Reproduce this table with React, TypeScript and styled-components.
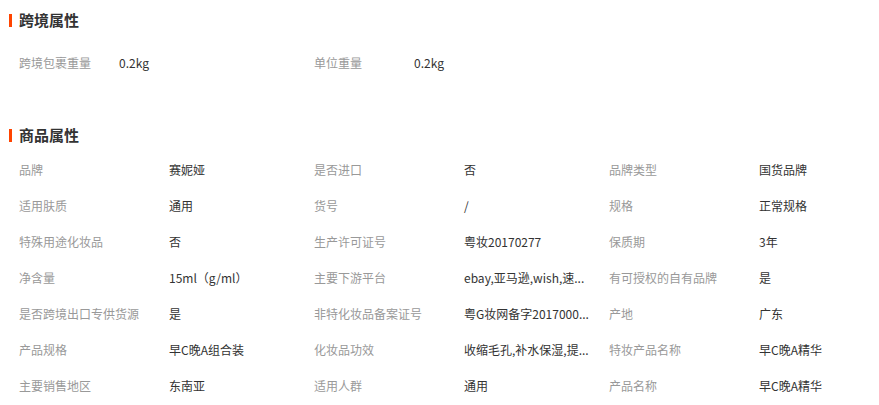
import React from "react";
import styled, { createGlobalStyle } from "styled-components";

const GlobalStyle = createGlobalStyle`
  html, body {
    margin: 0;
    padding: 0;
    background: #ffffff;
  }
  body {
    font-family: "Noto Sans CJK SC", "Liberation Sans", sans-serif;
    font-size: 12px;
    color: #333333;
  }
`;

const Page = styled.div`
  width: 879px;
  height: 405px;
  padding-top: 5px;
  box-sizing: border-box;
  overflow: hidden;
`;

const Section = styled.section<{ $gap?: number }>`
  margin-top: ${(p) => p.$gap ?? 0}px;
`;

const Title = styled.h3`
  margin: 0;
  height: 30px;
  line-height: 30px;
  display: flex;
  align-items: center;
  padding-left: 9px;
  font-size: 15px;
  font-weight: 700;
  color: #333333;
`;

const Bar = styled.span`
  display: inline-block;
  width: 3px;
  height: 13px;
  background: #ff4400;
  margin-right: 7px;
`;

const Grid = styled.div<{ $cols: number; $top: number }>`
  display: grid;
  grid-template-columns: repeat(${(p) => p.$cols}, 295px);
  padding-left: 19px;
  padding-top: ${(p) => p.$top}px;
`;

const Item = styled.div<{ $labelWidth: number }>`
  display: flex;
  align-items: center;
  height: 36px;
  line-height: 36px;
  & > span:first-child {
    width: ${(p) => p.$labelWidth}px;
    flex: none;
  }
`;

const Label = styled.span`
  color: #999999;
  white-space: nowrap;
`;

const Value = styled.span`
  color: #333333;
  white-space: nowrap;
`;

const crossBorder: [string, string][] = [
  ["跨境包裹重量", "0.2kg"],
  ["单位重量", "0.2kg"],
];

const goods: [string, string][] = [
  ["品牌", "赛妮娅"],
  ["是否进口", "否"],
  ["品牌类型", "国货品牌"],
  ["适用肤质", "通用"],
  ["货号", "/"],
  ["规格", "正常规格"],
  ["特殊用途化妆品", "否"],
  ["生产许可证号", "粤妆20170277"],
  ["保质期", "3年"],
  ["净含量", "15ml（g/ml）"],
  ["主要下游平台", "ebay,亚马逊,wish,速..."],
  ["有可授权的自有品牌", "是"],
  ["是否跨境出口专供货源", "是"],
  ["非特化妆品备案证号", "粤G妆网备字2017000..."],
  ["产地", "广东"],
  ["产品规格", "早C晚A组合装"],
  ["化妆品功效", "收缩毛孔,补水保湿,提..."],
  ["特妆产品名称", "早C晚A精华"],
  ["主要销售地区", "东南亚"],
  ["适用人群", "通用"],
  ["产品名称", "早C晚A精华"],
];

export default function App() {
  return (
    <>
      <GlobalStyle />
      <Page>
        <Section>
          <Title>
            <Bar />
            跨境属性
          </Title>
          <Grid $cols={2} $top={10}>
            {crossBorder.map(([k, v]) => (
              <Item key={k} $labelWidth={100}>
                <Label>{k}</Label>
                <Value>{v}</Value>
              </Item>
            ))}
          </Grid>
        </Section>
        <Section $gap={39}>
          <Title>
            <Bar />
            商品属性
          </Title>
          <Grid $cols={3} $top={2}>
            {goods.map(([k, v]) => (
              <Item key={k} $labelWidth={150}>
                <Label>{k}</Label>
                <Value>{v}</Value>
              </Item>
            ))}
          </Grid>
        </Section>
      </Page>
    </>
  );
}
